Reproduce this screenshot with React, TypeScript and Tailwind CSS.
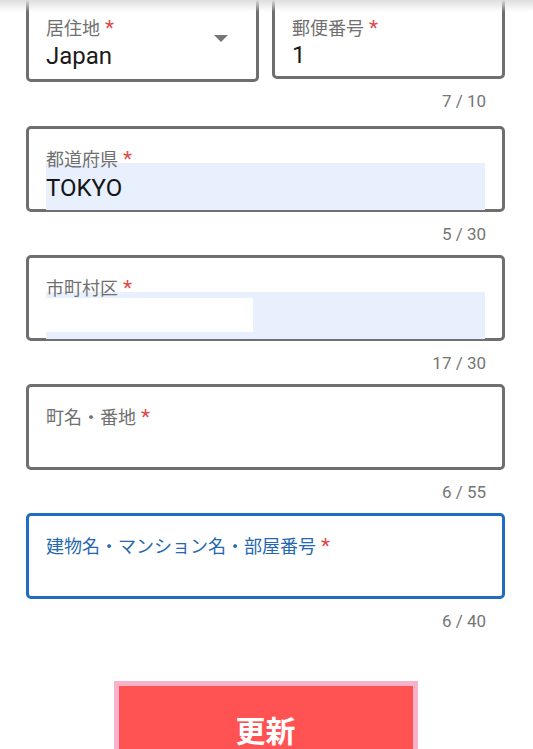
import React from 'react';

const font = { fontFamily: 'Roboto, "Noto Sans CJK JP", sans-serif' };

const Label = ({ text, blue }: { text: string; blue?: boolean }) => (
  <div
    className={`relative z-10 text-[18px] leading-[22px] font-['Roboto','Noto_Sans_CJK_JP',sans-serif] ${
      blue ? 'text-[#2568b0]' : 'text-[#707070]'
    }`}
  >
    {text}
    <span className="ml-[5px] text-[21px] text-[#e04a4a]">*</span>
  </div>
);

const Counter = ({ text }: { text: string }) => (
  <div className="h-[43px] pt-[12px] pr-[19px] text-right text-[17px] leading-[20px] text-[#757575]">
    {text}
  </div>
);

const Field = ({
  label,
  count,
  children,
  blue,
}: {
  label: string;
  count: string;
  children?: React.ReactNode;
  blue?: boolean;
}) => (
  <div>
    <div
      className={`h-[86px] rounded-[5px] border-[3px] px-[17px] pt-[19px] bg-white ${
        blue ? 'border-[#1f6cc0]' : 'border-[#6f6f6f]'
      }`}
    >
      <Label text={label} blue={blue} />
      {children}
    </div>
    <Counter text={count} />
  </div>
);

export default function App() {
  return (
    <div className="relative h-[749px] w-[533px] overflow-hidden bg-white" style={font}>
      <div className="absolute left-0 right-0 top-0 z-20 h-[12px] bg-linear-to-b from-[#dedede] to-transparent" />

      <div className="pl-[26px] pr-[28px]">
        <div className="mt-[-4px] grid grid-cols-2 gap-[13px] items-start">
          <div className="flex h-[86px] rounded-[5px] border-[3px] border-[#6f6f6f] pl-[17px] pr-[28px] pt-[18px]">
            <div className="flex-1">
              <Label text="居住地" />
              <div className="text-[24px] leading-[32px] text-[#1a1a1a]">Japan</div>
            </div>
            <div className="mt-[18px] h-0 w-0 border-l-[7px] border-r-[7px] border-t-[7px] border-l-transparent border-r-transparent border-t-[#757575]" />
          </div>
          <div>
            <div className="h-[83px] rounded-[5px] border-[3px] border-[#6f6f6f] pl-[17px] pt-[18px]">
              <Label text="郵便番号" />
              <div className="text-[24px] leading-[30px] text-[#1a1a1a]">1</div>
            </div>
            <div className="h-[47px] pt-[12px] pr-[19px] text-right text-[17px] leading-[20px] text-[#757575]">
              7 / 10
            </div>
          </div>
        </div>

        <Field label="都道府県" count="5 / 30">
          <div className="mt-[-8px] flex h-[47px] items-center bg-[#e8effd] pt-[2px] text-[24px] text-[#151515]">
            TOKYO
          </div>
        </Field>

        <Field label="市町村区" count="17 / 30">
          <div className="mt-[-8px] h-[47px] bg-[#e8effd] pt-[6px]">
            <div className="h-[34px] w-[207px] bg-white" />
          </div>
        </Field>

        <Field label="町名・番地" count="6 / 55" />

        <Field label="建物名・マンション名・部屋番号" count="6 / 40" blue />

        <div className="mt-[39px] flex justify-center">
          <button className="flex h-[96px] w-[304px] items-center justify-center border-[5px] border-[#f8b3cb] bg-[#ff5353] text-[30px] font-bold text-white font-['Noto_Sans_CJK_JP',sans-serif]">
            更新
          </button>
        </div>
      </div>
    </div>
  );
}
